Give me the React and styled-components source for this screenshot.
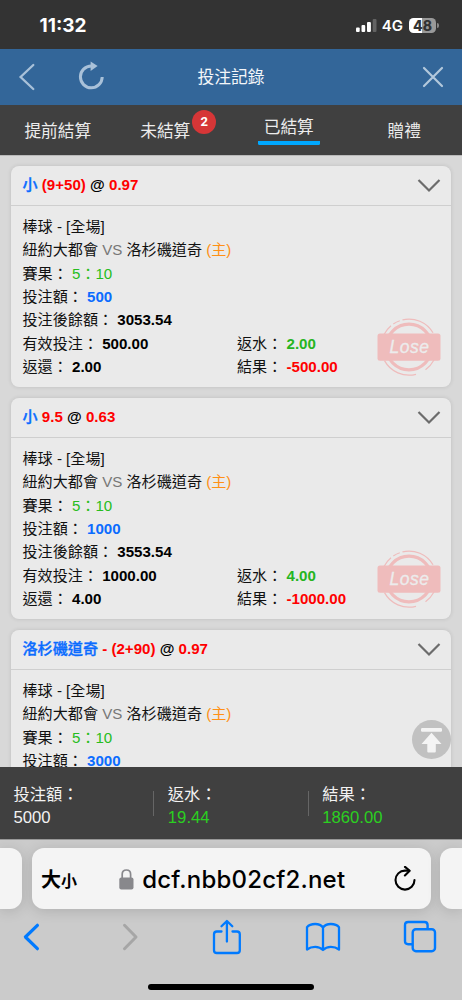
import { Fragment } from 'react';
import styled, { createGlobalStyle } from 'styled-components';

const tabs = [
  { label: '提前結算' },
  { label: '未結算', count: 2 },
  { label: '已結算', active: true },
  { label: '贈禮' },
]

const bets = [
  { pick: '小', line: '(9+50)', odds: '0.97', stake: '500', settled: { balance: '3053.54', valid: '500.00', returned: '2.00', rebate: '2.00', result: '-500.00' } },
  { pick: '小', line: '9.5', odds: '0.63', stake: '1000', settled: { balance: '3553.54', valid: '1000.00', returned: '4.00', rebate: '4.00', result: '-1000.00' } },
  { pick: '洛杉磯道奇', line: '- (2+90)', odds: '0.97', stake: '3000' },
]

const totals = [
  { label: '投注額：', value: '5000' },
  { label: '返水：', value: '19.44', win: true },
  { label: '結果：', value: '1860.00', win: true },
]

function LoseStamp() {
  return (
    <Stamp width="64" height="60" viewBox="0 0 64 60">
      <g fill="none" stroke="#efbcbc">
        <circle cx="32" cy="30" r="22.8" strokeWidth="3.2" />
        <path d="M25.5 2.8A28 28 0 0 1 56 15.8" strokeWidth="1.2" />
        <path d="M16.3 7Q19.3 5 22.8 3.8" strokeWidth="1.2" />
        <path d="M7 17.5Q10 12.2 14 8.8" strokeWidth="1.2" />
        <path d="M7.5 43.6A28 28 0 0 0 39 57.3" strokeWidth="1.2" />
        <path d="M48.5 52.8Q54 48.5 57 43" strokeWidth="1.2" />
      </g>
      <rect x="0.5" y="16.5" width="63" height="27.2" rx="2.5" fill="#efbcbc" />
      <text x="12.6" y="36.2" fill="#ececec" stroke="#ececec" strokeWidth="0.3" fontFamily="Liberation Sans, Arial, sans-serif" fontStyle="italic" fontSize="17.5" textLength="39.5">Lose</text>
    </Stamp>
  )
}

function Settlement({ settled }) {
  return (
    <>
      <Row>投注後餘額： <Value>{settled.balance}</Value></Row>
      <SplitRow>
        <span>有效投注： <Value>{settled.valid}</Value></span>
        <span>返水： <Value $color="#26b51f">{settled.rebate}</Value></span>
      </SplitRow>
      <SplitRow>
        <span>返還： <Value>{settled.returned}</Value></span>
        <span>結果： <Value $color="#ff0000">{settled.result}</Value></span>
      </SplitRow>
      <LoseStamp />
    </>
  )
}

function BetCard({ bet }) {
  return (
    <Card>
      <CardHead>
        <CardTitle>
          <Pick>{bet.pick}</Pick> <Tint $color="#ff0000">{bet.line}</Tint> @ <Tint $color="#ff0000">{bet.odds}</Tint>
        </CardTitle>
        <svg width="24" height="14" viewBox="0 0 24 14" fill="none" stroke="#6c6c6c" strokeWidth="2.2">
          <path d="M1.5 1L12 11.5L22.5 1" />
        </svg>
      </CardHead>
      <CardBody>
        <Row>棒球 - [全場]</Row>
        <Row>紐約大都會 <Tint $color="#777">VS</Tint> 洛杉磯道奇 <Tint $color="#ff9015">(主)</Tint></Row>
        <Row>賽果： <Tint $color="#26bd20">5：10</Tint></Row>
        <Row>投注額： <Value $color="#0a6cff">{bet.stake}</Value></Row>
        {bet.settled && <Settlement settled={bet.settled} />}
      </CardBody>
    </Card>
  )
}

function App() {
  return (
    <>
      <GlobalStyle />
      <Phone>
        <StatusBar>
          <Clock>11:32</Clock>
          <StatusIcons>
            <svg width="21" height="14" viewBox="0 0 21 14" fill="#fff">
              <rect x="0" y="8.5" width="3.7" height="4.5" rx="1" />
              <rect x="5.5" y="6" width="3.7" height="7" rx="1" />
              <rect x="11" y="3" width="3.9" height="10" rx="1" />
              <rect x="16.7" y="0" width="3.8" height="13" rx="1" fill="#626262" />
            </svg>
            <Network>4G</Network>
            <Battery>48</Battery>
          </StatusIcons>
        </StatusBar>

        <Header>
          <HeaderSide>
            <svg width="17" height="28" viewBox="0 0 17 28" fill="none" stroke="#a9c1d9" strokeWidth="2.3" strokeLinecap="round">
              <path d="M15.3 2L2.6 14L15.3 26" />
            </svg>
            <svg width="28" height="32" viewBox="0 0 28 32" fill="none">
              <path d="M16 5H14.3A10.9 10.9 0 1 0 25.2 16" stroke="#a9c1d9" strokeWidth="3" />
              <path d="M13.6 0.4L20.6 5.1L13.6 10Z" fill="#a9c1d9" />
            </svg>
          </HeaderSide>
          <Title>投注記錄</Title>
          <HeaderSide $end>
            <svg width="22" height="22" viewBox="0 0 22 22" fill="none" stroke="#b3c8dc" strokeWidth="2.2" strokeLinecap="round">
              <path d="M2 2L20 20M20 2L2 20" />
            </svg>
          </HeaderSide>
        </Header>

        <Tabs>
          {tabs.map((tab) =>
            <Tab key={tab.label} $counted={tab.count}>
              <TabLabel $active={tab.active}>
                {tab.label}
                {tab.count && <Badge>{tab.count}</Badge>}
              </TabLabel>
            </Tab>
          )}
        </Tabs>

        <List>
          {bets.map((bet) => <BetCard key={bet.stake} bet={bet} />)}
          <TopButton>
            <svg width="39" height="39" viewBox="0 0 39 39" fill="#f4f4f4">
              <rect x="9" y="8" width="21" height="3.8" rx="1.2" />
              <path d="M19.5 12.8L29.5 24H23.8V31.5Q23.8 32.6 22.7 32.6H16.4Q15.3 32.6 15.3 31.5V24H9.5Z" />
            </svg>
          </TopButton>
        </List>

        <Summary>
          {totals.map((total, i) =>
            <Fragment key={total.label}>
              {i > 0 && <Divider />}
              <Total>
                <div>{total.label}</div>
                <TotalValue $win={total.win}>{total.value}</TotalValue>
              </Total>
            </Fragment>
          )}
        </Summary>

        <Browser>
          <AddressRow>
            <AddressEdge $left />
            <Address>
              <TextSize>大<small>小</small></TextSize>
              <Site>
                <svg width="15" height="21" viewBox="0 0 15 21">
                  <path d="M3.2 9V5.2Q3.2 1 7.4 1Q11.6 1 11.6 5.2V9" fill="none" stroke="#88888c" strokeWidth="1.7" />
                  <rect x="0.3" y="8.4" width="14.2" height="12" rx="2" fill="#88888c" />
                </svg>
                <Domain>dcf.nbb02cf2.net</Domain>
              </Site>
              <svg width="22" height="28" viewBox="0 0 22 28" fill="none" stroke="#000" strokeWidth="2.1" strokeLinecap="round" strokeLinejoin="round">
                <path d="M14.8 4.6H11A9.5 9.5 0 1 0 20.5 14.1" />
                <path d="M11 0.9L15.7 4.8L10.9 9.5" />
              </svg>
            </Address>
            <AddressEdge />
          </AddressRow>
          <Toolbar>
            <ToolButton>
              <svg width="17" height="28" viewBox="0 0 17 28" fill="none" stroke="#007aff" strokeWidth="3.2" strokeLinecap="round" strokeLinejoin="round">
                <path d="M14.4 2.3L2.4 14L14.4 25.7" />
              </svg>
            </ToolButton>
            <ToolButton $nudge="5px">
              <svg width="17" height="28" viewBox="0 0 17 28" fill="none" stroke="#a6a6a6" strokeWidth="3" strokeLinecap="round" strokeLinejoin="round">
                <path d="M2.5 2.3L14 14L2.5 25.7" />
              </svg>
            </ToolButton>
            <ToolButton $nudge="2px">
              <svg width="30" height="36" viewBox="0 0 30 36" fill="none" stroke="#007aff" strokeWidth="2.3" strokeLinecap="round" strokeLinejoin="round">
                <path d="M9.5 12.5H4.8Q2 12.5 2 15.3V31.2Q2 34 4.8 34H25Q27.8 34 27.8 31.2V15.3Q27.8 12.5 25 12.5H20.5" />
                <path d="M14.9 22.5V2.3M9.5 7.3L14.9 2L20.3 7.3" />
              </svg>
            </ToolButton>
            <ToolButton>
              <svg width="36" height="30" viewBox="0 0 36 30" fill="none" stroke="#007aff" strokeWidth="2.3" strokeLinejoin="round">
                <path d="M18 5.5Q15.5 2 10.2 2Q4.5 2 2 5.2V27.5Q5.5 24.8 10.2 24.8Q15 24.8 18 28Q21 24.8 25.8 24.8Q30.5 24.8 34 27.5V5.2Q31.5 2 25.8 2Q20.5 2 18 5.5ZV28" />
              </svg>
            </ToolButton>
            <ToolButton>
              <svg width="34" height="33" viewBox="0 0 34 33" fill="none" stroke="#007aff" strokeWidth="2.4" strokeLinejoin="round">
                <path d="M9 24.2H5.2Q2 24.2 2 21V5.2Q2 2 5.2 2H21.4Q24.6 2 24.6 5.2V9" />
                <rect x="9.7" y="9.2" width="22.3" height="22" rx="3.2" />
              </svg>
            </ToolButton>
          </Toolbar>
          <HomeIndicator />
        </Browser>
      </Phone>
    </>
  )
}

const GlobalStyle = createGlobalStyle`
  * {
    box-sizing: border-box;
  }

  body {
    margin: 0;
    font-family: "Liberation Sans", "Noto Sans CJK TC", sans-serif;
  }

  svg {
    display: block;
    flex: none;
  }
`

const Phone = styled.div`
  display: flex;
  flex-direction: column;
  width: 462px;
  height: 1000px;
  overflow: hidden;
  background: #d8d8d8;
`

const StatusBar = styled.div`
  display: flex;
  justify-content: space-between;
  align-items: center;
  flex: none;
  height: 49px;
  padding: 2px 26px 0 39.5px;
  background: #333;
  color: #fff;
  font-family: Inter, sans-serif;
`

const Clock = styled.div`
  font-size: 19px;
  font-weight: 700;
`

const StatusIcons = styled.div`
  display: flex;
  align-items: center;
`

const Network = styled.div`
  margin: 0 6px 0 5px;
  font-size: 15px;
  font-weight: 600;
`

const Battery = styled.div`
  position: relative;
  width: 27px;
  height: 15px;
  border-radius: 4.5px;
  background: linear-gradient(90deg, #fff 48%, #999 48%);
  color: #333;
  font-size: 14px;
  font-weight: 800;
  line-height: 15px;
  text-align: center;

  &::after {
    content: '';
    position: absolute;
    right: -2.5px;
    top: 5px;
    width: 1.5px;
    height: 5px;
    border-radius: 0 2px 2px 0;
    background: #888;
  }
`

const Header = styled.div`
  display: grid;
  grid-template-columns: 1fr auto 1fr;
  align-items: center;
  flex: none;
  height: 56px;
  padding: 0 18px;
  background: #336699;
`

const HeaderSide = styled.div`
  display: flex;
  align-items: center;
  justify-content: ${props => props.$end ? 'flex-end' : 'flex-start'};
  gap: 42px;
`

const Title = styled.div`
  padding-top: 2px;
  color: #f3f6f9;
  font-size: 16.8px;
  line-height: 24px;
`

const Tabs = styled.div`
  display: grid;
  grid-template-columns: repeat(4, 1fr);
  flex: none;
  height: 50px;
  background: #404040;
`

const Tab = styled.div`
  display: flex;
  justify-content: center;
  align-items: flex-start;
  padding-right: ${props => props.$counted ? '16px' : '0'};
`

const TabLabel = styled.div`
  position: relative;
  height: ${props => props.$active ? '40px' : '50px'};
  padding: ${props => props.$active ? '0 6px' : '0'};
  border-bottom: ${props => props.$active ? '4px solid #00a8ff' : 'none'};
  border-radius: 1.5px;
  color: #ececec;
  font-size: 16.7px;
  line-height: ${props => props.$active ? '46px' : '53px'};
`

const Badge = styled.div`
  position: absolute;
  left: 52px;
  top: 5px;
  width: 24px;
  height: 24px;
  border-radius: 50%;
  background: #d63637;
  color: #fff;
  font-family: Roboto, sans-serif;
  font-size: 13px;
  font-weight: 700;
  line-height: 23px;
  text-align: center;
`

const List = styled.div`
  position: relative;
  display: flex;
  flex-direction: column;
  gap: 11px;
  flex: none;
  height: 612px;
  padding: 10px 11px 0;
  overflow: hidden;
  border-top: 1px solid #b9b9b9;
`

const Card = styled.div`
  position: relative;
  flex: none;
  height: 221px;
  border-radius: 8px;
  background: #eaeaea;
  box-shadow: 0 0 4px rgba(0, 0, 0, 0.12);
`

const CardHead = styled.div`
  display: flex;
  justify-content: space-between;
  align-items: center;
  height: 40px;
  padding: 0 10px 0 11.5px;
  border-bottom: 1px solid #cfcfcf;
`

const CardTitle = styled.div`
  padding-bottom: 1px;
  color: #000;
  font-size: 15.1px;
  font-weight: 700;
  line-height: 22px;
`

const CardBody = styled.div`
  padding: 8.7px 11.5px 0;
  color: #111;
  font-size: 15.1px;
`

const Row = styled.div`
  height: 23.45px;
  line-height: 23.45px;
  white-space: nowrap;
`

const SplitRow = styled(Row)`
  display: grid;
  grid-template-columns: 214.5px 1fr;
`

const Tint = styled.span`
  color: ${props => props.$color};
`

const Pick = styled.span`
  color: #0a6cff;
  font-weight: 500;
  -webkit-text-stroke: 0.35px #0a6cff;
`

const Value = styled.b`
  color: ${props => props.$color || '#000'};
`

const Stamp = styled.svg`
  position: absolute;
  right: 10.5px;
  bottom: 10px;
`

const TopButton = styled.div`
  position: absolute;
  right: 11px;
  bottom: 8px;
  width: 39px;
  height: 39px;
  border-radius: 50%;
  background: #c1c1c1;
`

const Summary = styled.div`
  display: flex;
  align-items: center;
  flex: none;
  height: 72px;
  background: #404040;
  color: #f2f2f2;
  font-size: 16.3px;
  line-height: 23px;
`

const Total = styled.div`
  width: 153.5px;
  padding: 5px 0 0 13.5px;
`

const TotalValue = styled.div`
  color: ${props => props.$win ? '#2bd021' : '#f2f2f2'};
  font-size: 16.7px;
`

const Divider = styled.div`
  width: 1px;
  height: 25px;
  background: #666;
`

const Browser = styled.div`
  display: flex;
  flex-direction: column;
  align-items: center;
  flex: none;
  height: 161px;
  border-top: 1px solid #999;
  background: #cbcbcb;
`

const AddressRow = styled.div`
  display: flex;
  justify-content: space-between;
  width: 100%;
  height: 61px;
  margin-top: 8px;
`

const AddressEdge = styled.div`
  width: 22px;
  border-radius: ${props => props.$left ? '0 12px 12px 0' : '12px 0 0 12px'};
  background: #f4f4f4;
  box-shadow: 0 2px 14px rgba(0, 0, 0, 0.14);
`

const Address = styled.div`
  display: flex;
  justify-content: space-between;
  align-items: center;
  width: 399px;
  padding: 2px 14px 0 9.5px;
  border-radius: 12px;
  background: #f4f4f4;
  box-shadow: 0 2px 14px rgba(0, 0, 0, 0.14);
  color: #000;
`

const TextSize = styled.div`
  font-family: "Noto Sans CJK TC", sans-serif;
  font-size: 20px;
  font-weight: 700;
  line-height: 24px;

  small {
    font-size: 16px;
  }
`

const Site = styled.div`
  display: flex;
  align-items: center;
  gap: 8px;
  margin-right: 7px;
`

const Domain = styled.div`
  font-family: Inter, sans-serif;
  font-size: 24px;
  font-weight: 500;
  letter-spacing: 0.2px;
`

const Toolbar = styled.div`
  display: flex;
  justify-content: space-between;
  align-items: center;
  width: 100%;
  height: 55px;
  padding: 0 24px 0 13px;
`

const ToolButton = styled.div`
  display: flex;
  justify-content: center;
  width: 36px;
  padding-left: ${props => props.$nudge || '0'};
`

const HomeIndicator = styled.div`
  width: 166px;
  height: 6px;
  margin-top: 20px;
  border-radius: 3px;
  background: #000;
`

export default App;
